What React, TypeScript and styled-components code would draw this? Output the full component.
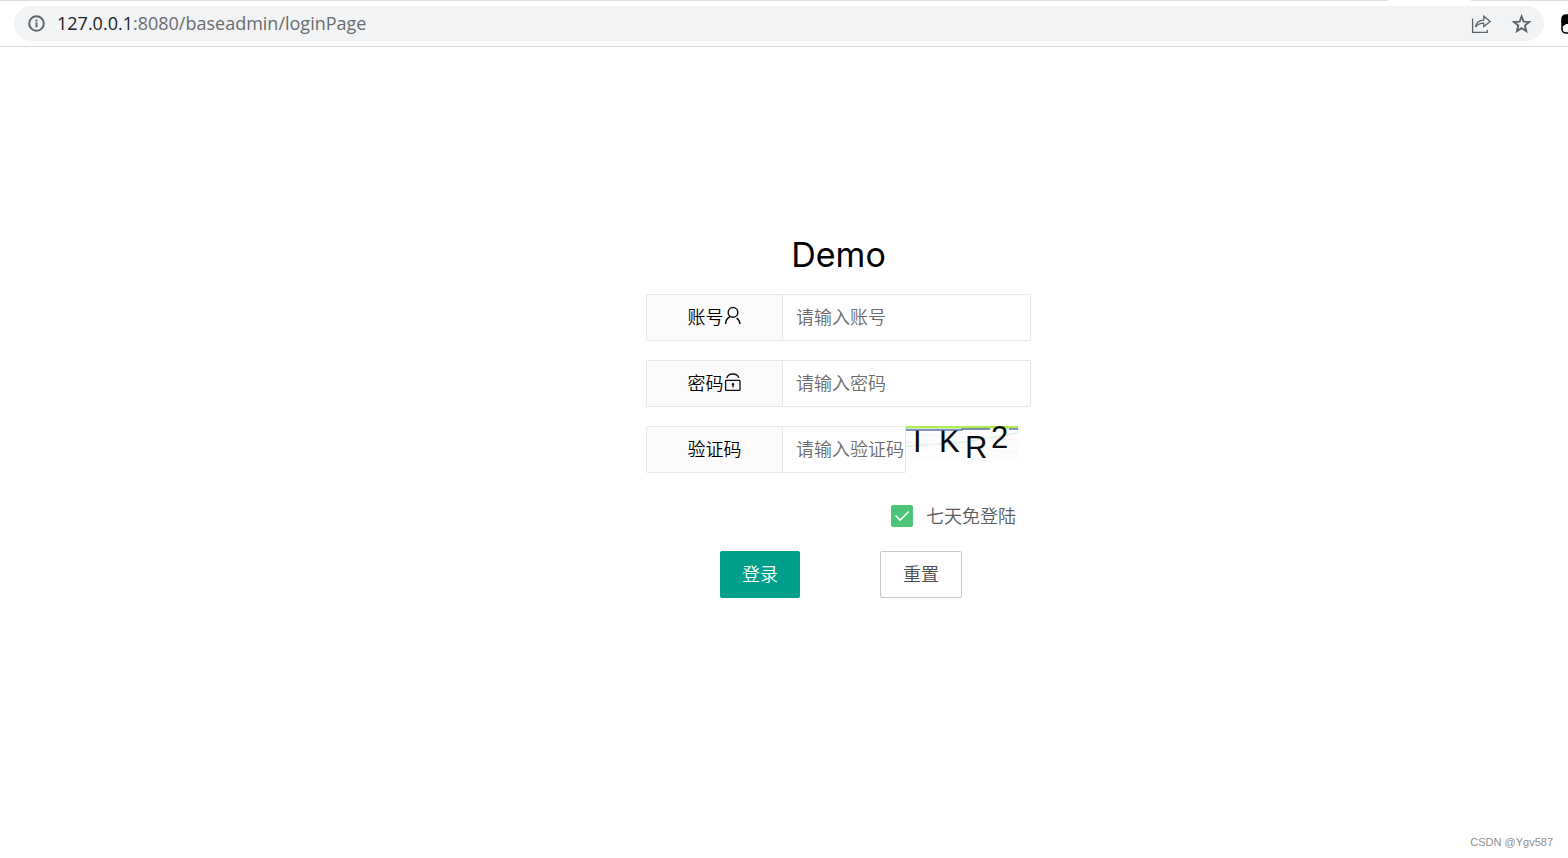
import React from 'react';
import styled, { createGlobalStyle } from 'styled-components';

const GlobalStyle = createGlobalStyle`
  *, *::before, *::after { box-sizing: border-box; }
  body {
    margin: 0;
    background: #fff;
    color: #000;
    font: 350 18px/24px "Noto Sans CJK SC", sans-serif;
  }
`;

const Page = styled.div`
  display: flex;
  flex-direction: column;
  min-height: 100vh;
  overflow: hidden;
`;

const TabEdge = styled.div`
  display: flex;
  justify-content: space-between;
  height: 1px;
`;

const TabLine = styled.span<{ $width?: number }>`
  flex: ${p => (p.$width ? `0 0 ${p.$width}px` : '1')};
  margin-right: ${p => (p.$width ? 0 : 83)}px;
  background: #dcdbe6;
`;

const Toolbar = styled.header`
  display: flex;
  align-items: center;
  gap: 17px;
  height: 46px;
  padding-left: 14px;
  border-bottom: 1px solid #d9dadc;
`;

const AddressBar = styled.div`
  display: flex;
  flex: 1;
  align-items: center;
  height: 35px;
  padding: 0 10px 0 13px;
  border-radius: 18px;
  background: #f1f3f4;
`;

const Address = styled.span`
  flex: 1;
  margin-left: 11px;
  padding-bottom: 2px;
  color: #6a6c6f;
  font: 400 18px/24px "Open Sans", sans-serif;
`;

const Host = styled.span`
  color: #202124;
`;

const IconButton = styled.button`
  display: flex;
  margin-left: 17px;
  padding: 0;
  border: 0;
  background: none;
  color: #5f6368;
`;

const Extension = styled.span`
  width: 7px;
  height: 20px;
  overflow: hidden;
`;

const Main = styled.main`
  display: flex;
  flex: 1;
  flex-direction: column;
  align-items: center;
  padding: 184px 0 0 109px;
`;

const Form = styled.form`
  display: flex;
  flex-direction: column;
  width: 385px;
`;

const Title = styled.h1`
  margin: 0 0 15px;
  font: 400 34px/48px Inter, sans-serif;
  text-align: center;
`;

const Row = styled.div`
  display: flex;
  align-items: flex-start;
  margin-bottom: 19px;
`;

const Label = styled.label`
  display: flex;
  align-items: center;
  justify-content: center;
  width: 137px;
  height: 47px;
  padding-bottom: 3px;
  border: 1px solid #e6e6e6;
  border-radius: 2px 0 0 2px;
  background: #fbfbfb;
`;

const Input = styled.input<{ $short?: boolean }>`
  flex: ${p => (p.$short ? '0 0 123px' : '1')};
  min-width: 0;
  height: 47px;
  padding: 0 0 4px 13px;
  border: 1px solid #e6e6e6;
  border-left: 0;
  border-radius: 0 2px 2px 0;
  background: #fff;
  color: #000;
  font: inherit;
  outline: none;
  &::placeholder { color: #6c6c6c; opacity: 1; }
`;

const Remember = styled.label`
  display: flex;
  align-items: center;
  align-self: flex-end;
  gap: 13px;
  margin: 12px 15px 23px 0;
  color: #5c5c5c;
`;

const RememberText = styled.span`
  height: 24px;
  line-height: 22px;
`;

const CheckWrap = styled.span`
  display: grid;
  width: 22px;
  height: 22px;
  & > * { grid-area: 1 / 1; }
  svg { pointer-events: none; }
`;

const Checkbox = styled.input`
  appearance: none;
  width: 22px;
  height: 22px;
  margin: 0;
  border: 1px solid #d2d2d2;
  border-radius: 2px;
  &:checked { border-color: #4ac676; background: #4ac676; }
  &:not(:checked) + svg { visibility: hidden; }
`;

const Actions = styled.div`
  display: flex;
  gap: 80px;
  padding-left: 74px;
`;

const Button = styled.button<{ $primary?: boolean }>`
  height: 47px;
  padding: 0 22px 4px;
  border: ${p => (p.$primary ? '0' : '1px solid #c9c9c9')};
  border-radius: 2px;
  background: ${p => (p.$primary ? '#009f8b' : '#fff')};
  color: ${p => (p.$primary ? '#fff' : '#4c4c4c')};
  font: inherit;
  cursor: pointer;
`;

const Watermark = styled.footer`
  padding: 0 15px 8px;
  color: #8f8f8f;
  font: 400 11px/16px "Liberation Sans", sans-serif;
  text-align: right;
`;

const CaptchaImage = styled.svg`
  overflow: visible;
`;

const InfoIcon = () => (
  <svg width="19" height="19" viewBox="0 0 19 19" fill="none" stroke="#5f6368" strokeWidth="2" aria-hidden="true">
    <circle cx="9.5" cy="9.5" r="7.3" />
    <path d="M9.5 8.6v4.6M9.5 5.4v2" />
  </svg>
);

const ShareIcon = () => (
  <svg width="22" height="20" viewBox="0 0 22 20" fill="none" stroke="currentColor" strokeWidth="1.3" aria-hidden="true">
    <path d="M1.6 4.6v13.8h14.6v-2.6" />
    <path d="M4.6 13.2c.6-4.6 3.4-6.8 8.2-7V2.2l6.4 5.2-6.4 5.2V9.2c-3.6 0-6.2 1.2-8.2 4z" />
  </svg>
);

const StarIcon = () => (
  <svg width="24" height="24" viewBox="0 0 24 24" fill="none" stroke="currentColor" strokeWidth="1.9" aria-hidden="true">
    <path d="M11.6 4.4l2 5.2 5.6.4-4.3 3.6 1.4 5.5-4.7-3-4.7 3 1.4-5.5L4 10l5.6-.4z" />
  </svg>
);

const UserIcon = () => (
  <svg width="18" height="20" viewBox="0 0 18 20" fill="none" stroke="#111" strokeWidth="1.5" aria-hidden="true">
    <circle cx="9" cy="6.4" r="4.8" />
    <path d="M6.2 10.5C3.4 11.9 1.7 14.6 1.6 18M12.6 12.1c2 1.3 3.2 3.2 3.4 5.9" />
  </svg>
);

const LockIcon = () => (
  <svg width="18" height="20" viewBox="0 0 18 20" fill="none" stroke="#111" strokeWidth="1.3" aria-hidden="true">
    <rect x="1.6" y="8.4" width="14.4" height="10" rx="0.6" />
    <path d="M2.7 5.9C3.7 3.3 6 2 8.8 2c2.9 0 5.2 1.3 6.1 3.9" />
    <path d="M9 12v3.6" strokeWidth="1.2" />
    <circle cx="9" cy="12.2" r="1.2" fill="#111" stroke="none" />
  </svg>
);

const Captcha = () => (
  <CaptchaImage width="112" height="35" viewBox="0 0 112 35" role="img" aria-label="验证码图片">
    <rect width="112" height="35" fill="#fdfdfd" />
    <path d="M0 20.5L60 16L112 7" stroke="#cdeed6" fill="none" />
    <path d="M0 8L112 14M0 16L112 27" stroke="#f8f2f8" fill="none" />
    <rect width="112" height="2" fill="#adf04b" />
    <path d="M0 2.5H112" stroke="#d0e9c8" fill="none" />
    <g fill="#0a0a0a" fontFamily="Liberation Sans, sans-serif" fontSize="31">
      <text x="7" y="26">I</text>
      <text x="33" y="26">K</text>
      <text x="59" y="32">R</text>
      <text x="85" y="22">2</text>
    </g>
    <path d="M0 4H56V3H84" stroke="#5a6ea5" strokeWidth="1.4" fill="none" />
    <path d="M103 3H112" stroke="#5a6ea5" strokeWidth="1.4" fill="none" />
  </CaptchaImage>
);

export default function App() {
  return (
    <Page>
      <GlobalStyle />
      <TabEdge>
        <TabLine />
        <TabLine $width={97} />
      </TabEdge>
      <Toolbar>
        <AddressBar>
          <InfoIcon />
          <Address><Host>127.0.0.1</Host>:8080/baseadmin/loginPage</Address>
          <IconButton type="button" aria-label="分享"><ShareIcon /></IconButton>
          <IconButton type="button" aria-label="收藏"><StarIcon /></IconButton>
        </AddressBar>
        <Extension>
          <svg width="20" height="20" viewBox="0 0 20 20" aria-hidden="true">
            <rect x="1" y="1" width="22" height="18" rx="4" fill="#fff" stroke="#000" strokeWidth="1.6" />
            <path d="M1 12V5a4 4 0 0 1 4-4h15v9H6c-2 0-3 3-5 2z" />
          </svg>
        </Extension>
      </Toolbar>
      <Main>
        <Form onSubmit={e => e.preventDefault()}>
          <Title>Demo</Title>
          <Row>
            <Label htmlFor="account">账号<UserIcon /></Label>
            <Input id="account" placeholder="请输入账号" />
          </Row>
          <Row>
            <Label htmlFor="password">密码<LockIcon /></Label>
            <Input id="password" type="password" placeholder="请输入密码" />
          </Row>
          <Row>
            <Label htmlFor="captcha">验证码</Label>
            <Input id="captcha" $short placeholder="请输入验证码" />
            <Captcha />
          </Row>
          <Remember>
            <CheckWrap>
              <Checkbox type="checkbox" defaultChecked />
              <svg width="22" height="22" viewBox="0 0 22 22" fill="none" stroke="#fff" strokeWidth="1.5" aria-hidden="true">
                <path d="M4.5 10.5l4.7 4.6 8.6-8.6" />
              </svg>
            </CheckWrap>
            <RememberText>七天免登陆</RememberText>
          </Remember>
          <Actions>
            <Button type="submit" $primary>登录</Button>
            <Button type="reset">重置</Button>
          </Actions>
        </Form>
      </Main>
      <Watermark>CSDN @Ygv587</Watermark>
    </Page>
  );
}
